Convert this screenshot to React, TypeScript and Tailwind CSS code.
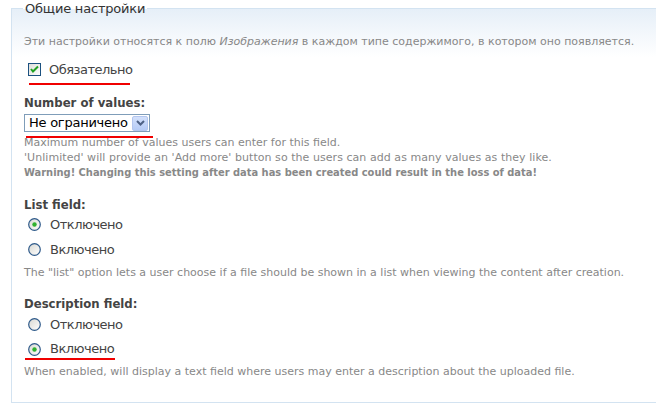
import React from "react";

const CheckBox = () => (
  <svg width="13" height="13" viewBox="0 0 13 13" className="shrink-0">
    <defs>
      <linearGradient id="cbg" x1="0" y1="0" x2="1" y2="1">
        <stop offset="0" stopColor="#dcdcd7" />
        <stop offset="1" stopColor="#ffffff" />
      </linearGradient>
    </defs>
    <rect x="0.5" y="0.5" width="12" height="12" fill="url(#cbg)" stroke="#1c5180" />
    <path d="M3 6 L5 8.5 L10 3.5" fill="none" stroke="#21a121" strokeWidth="2" />
  </svg>
);

const Radio = ({ checked }: { checked?: boolean }) => (
  <svg width="13" height="13" viewBox="0 0 13 13" className="shrink-0">
    <defs>
      <linearGradient id="rbg" x1="0" y1="0" x2="1" y2="1">
        <stop offset="0" stopColor="#d8d8d2" />
        <stop offset="1" stopColor="#ffffff" />
      </linearGradient>
    </defs>
    <circle cx="6.5" cy="6.5" r="5.8" fill="url(#rbg)" stroke="#2f5a8a" strokeWidth="1.2" />
    {checked && <circle cx="6.5" cy="6.5" r="2.2" fill="#2fb12f" />}
  </svg>
);

const RedLine = ({ className }: { className: string }) => (
  <div className={"absolute h-[2px] bg-[#f00000] " + className} />
);

// bold labels look like Tahoma, condensed DejaVu comes closest in width
const boldFont = "font-['DejaVu_Sans_Condensed','DejaVu_Sans',sans-serif] font-stretch-condensed font-bold";

export default function App() {
  return (
    <div className="w-[656px] h-[414px] overflow-hidden bg-white font-['DejaVu_Sans',Verdana,sans-serif]">
      <fieldset className="ml-[11px] w-[660px] border border-[#d3e3f1] bg-[linear-gradient(#e6eff8,#ffffff_48px)] px-[12px] pb-[23px]">
        <legend className="ml-[-1px] px-[2px] text-[13px] leading-[17px] tracking-[-0.2px] text-[#333]">Общие настройки</legend>

        <p className="mt-[17px] text-[11px] leading-[15px] text-[#888]">
          Эти настройки относятся к полю <em>Изображения</em> в каждом типе содержимого, в котором оно появляется.
        </p>

        <div className="relative mt-[12px] flex h-[17px] items-center gap-[8px] pl-[4px]">
          <CheckBox />
          <span className="text-[13px] tracking-[-0.5px] text-[#444]">Обязательно</span>
          <RedLine className="left-[5px] top-[22px] w-[101px]" />
        </div>

        <div className={"mt-[17px] text-[13px] leading-[16px] text-[#444] " + boldFont}>Number of values:</div>
        <div className="relative mt-[3px]">
          <div className="flex h-[18px] w-[126px] items-center border border-[#7f9db9] bg-white pl-[4px] pr-[1px]">
            <span className="flex-1 text-[13px] leading-[16px] tracking-[-0.25px] text-black">Не ограничено</span>
            <div className="flex h-[15px] w-[16px] items-center justify-center rounded-[2px] border border-[#b3c6ef] bg-[linear-gradient(#d3e0fb,#b5cbf6)]">
              <svg width="9" height="6" viewBox="0 0 9 6">
                <path d="M1 1 L4.5 4.5 L8 1" fill="none" stroke="#4d6185" strokeWidth="2" />
              </svg>
            </div>
          </div>
          <RedLine className="left-[2px] top-[22px] w-[127px]" />
        </div>
        <div className="mt-[3px] text-[11px] leading-[15px] text-[#888]">
          <div>Maximum number of values users can enter for this field.</div>
          <div className="tracking-[0.05px]">'Unlimited' will provide an 'Add more' button so the users can add as many values as they like.</div>
          <div className={boldFont}>Warning! Changing this setting after data has been created could result in the loss of data!</div>
        </div>

        <div className={"mt-[17px] text-[13px] leading-[16px] text-[#444] " + boldFont}>List field:</div>
        <div className="mt-[-1px] flex h-[25px] items-center gap-[9px] pl-[4px]">
          <Radio checked />
          <span className="text-[13px] tracking-[-0.5px] text-[#444]">Отключено</span>
        </div>
        <div className="flex h-[25px] items-center gap-[9px] pl-[4px]">
          <Radio />
          <span className="text-[13px] tracking-[-0.5px] text-[#444]">Включено</span>
        </div>
        <p className="mt-[3px] text-[11px] leading-[15px] text-[#888]">
          The "list" option lets a user choose if a file should be shown in a list when viewing the content after creation.
        </p>

        <div className={"mt-[16px] text-[13px] leading-[16px] text-[#444] " + boldFont}>Description field:</div>
        <div className="flex h-[25px] items-center gap-[9px] pl-[4px]">
          <Radio />
          <span className="text-[13px] tracking-[-0.5px] text-[#444]">Отключено</span>
        </div>
        <div className="relative flex h-[24px] items-center gap-[9px] pl-[4px]">
          <Radio checked />
          <span className="text-[13px] tracking-[-0.5px] text-[#444]">Включено</span>
          <RedLine className="left-[1px] top-[21px] w-[90px]" />
        </div>
        <p className="mt-[3px] text-[11px] leading-[15px] text-[#888]">
          When enabled, will display a text field where users may enter a description about the uploaded file.
        </p>
      </fieldset>
    </div>
  );
}
